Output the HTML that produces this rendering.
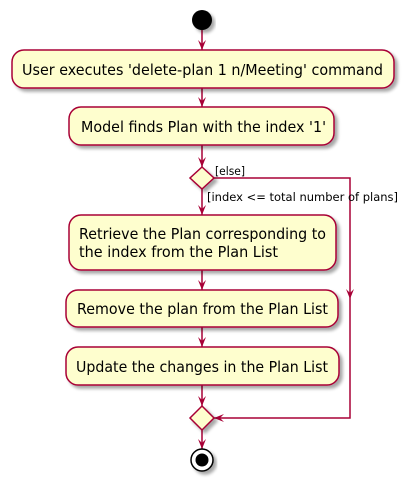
<!DOCTYPE html>
<html><head><style>body{margin:0;background:#fff}</style></head><body>
<svg width="410" height="487" xmlns="http://www.w3.org/2000/svg" font-family="DejaVu Sans, sans-serif">
<defs><filter id="s" x="-10%" y="-10%" width="130%" height="140%"><feGaussianBlur in="SourceAlpha" stdDeviation="1.5"/><feOffset dx="3" dy="3"/><feComponentTransfer><feFuncA type="linear" slope="0.35"/></feComponentTransfer><feMerge><feMergeNode/><feMergeNode in="SourceGraphic"/></feMerge></filter></defs>
<g stroke="#A80036" stroke-width="1.5" fill="none">
<line x1="202" y1="30" x2="202" y2="50"/>
<line x1="202" y1="88" x2="202" y2="107"/>
<line x1="202" y1="145" x2="202" y2="167"/>
<line x1="202" y1="189" x2="202" y2="215"/>
<line x1="202" y1="270" x2="202" y2="290"/>
<line x1="202" y1="327" x2="202" y2="347"/>
<line x1="202" y1="385" x2="202" y2="406"/>
<line x1="202" y1="430" x2="202" y2="449"/>
<polyline points="214,178 350,178 350,418 214,418"/>
</g>
<g fill="#A80036">
<polygon points="198,40 202,50 206,40 202,44"/>
<polygon points="198,97 202,107 206,97 202,101"/>
<polygon points="198,157 202,167 206,157 202,161"/>
<polygon points="198,205 202,215 206,205 202,209"/>
<polygon points="198,280 202,290 206,280 202,284"/>
<polygon points="198,337 202,347 206,337 202,341"/>
<polygon points="198,396 202,406 206,396 202,400"/>
<polygon points="198,439 202,449 206,439 202,443"/>
<polygon points="346,289 350,299 354,289 350,293"/>
<polygon points="224,414 214,418 224,422 220,418"/>
</g>
<circle cx="202" cy="20" r="10" fill="#000" filter="url(#s)"/>
<g fill="#FEFECE" stroke="#A80036" stroke-width="1.5" filter="url(#s)">
<rect x="12" y="50" width="382" height="38" rx="12"/>
<rect x="69" y="107" width="265" height="38" rx="12"/>
<rect x="69" y="215" width="267" height="55" rx="12"/>
<rect x="66" y="290" width="272" height="37" rx="12"/>
<rect x="66" y="347" width="273" height="38" rx="12"/>
<polygon points="202,167 214,178 202,189 190,178"/>
<polygon points="202,406 214,418 202,430 190,418"/>
</g>
<circle cx="202" cy="460" r="11" fill="#fff" stroke="#000" stroke-width="1.5" filter="url(#s)"/>
<circle cx="202" cy="460" r="6.5" fill="#000"/>
<g font-size="14.8" fill="#000">
<text x="22" y="75" textLength="361" lengthAdjust="spacingAndGlyphs">User executes 'delete-plan 1 n/Meeting' command</text>
<text x="81" y="132" textLength="245" lengthAdjust="spacingAndGlyphs">Model finds Plan with the index '1'</text>
<text x="79" y="239" textLength="247" lengthAdjust="spacingAndGlyphs">Retrieve the Plan corresponding to</text>
<text x="79" y="257" textLength="199" lengthAdjust="spacingAndGlyphs">the index from the Plan List</text>
<text x="77" y="314" textLength="251" lengthAdjust="spacingAndGlyphs">Remove the plan from the Plan List</text>
<text x="76" y="372" textLength="252" lengthAdjust="spacingAndGlyphs">Update the changes in the Plan List</text>
</g>
<g font-size="11.5" fill="#000">
<text x="215" y="175" textLength="30" lengthAdjust="spacingAndGlyphs">[else]</text>
<text x="207" y="201" textLength="191" lengthAdjust="spacingAndGlyphs">[index &lt;= total number of plans]</text>
</g>
</svg>
</body></html>
